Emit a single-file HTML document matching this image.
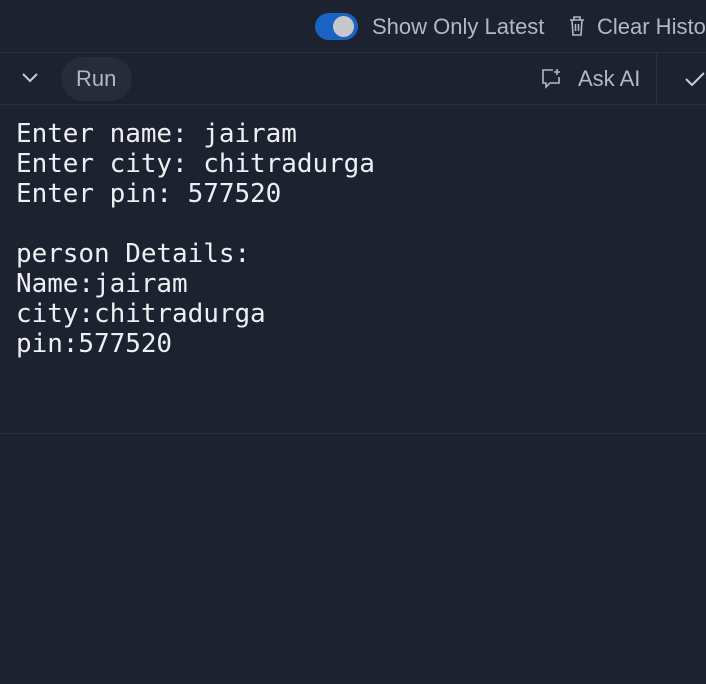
<!DOCTYPE html>
<html><head><style>
html,body{margin:0;padding:0;}
body{width:706px;height:684px;background:#1d2231;position:relative;overflow:hidden;font-family:"Liberation Sans",sans-serif;color:#c9ccd3;}
.ab{position:absolute;}
.line{position:absolute;left:0;width:706px;height:1px;background:#2a3040;}
pre{position:absolute;left:16px;top:119px;margin:0;font-family:"DejaVu Sans Mono",monospace;font-size:26px;line-height:30px;color:#eef0f3;letter-spacing:-0.05px;}
</style></head><body>
<div class="ab" style="left:315px;top:13px;width:43px;height:27px;border-radius:14px;background:#1a62c4;"></div>
<div class="ab" style="left:333px;top:16px;width:21px;height:21px;border-radius:50%;background:#c8c8cc;"></div>
<div class="ab" style="left:372px;top:14px;font-size:22px;color:#b4b8c2;">Show Only Latest</div>
<svg class="ab" style="left:568px;top:15px" width="18" height="22" viewBox="0 0 18 22" fill="none" stroke="#b4b8c2" stroke-width="1.6"><path d="M2 5h14M6 5V2h6v3M4 5l1 15h8l1-15M7.5 9v7M10.5 9v7"/></svg>
<div class="ab" style="left:597px;top:14px;font-size:22px;color:#b4b8c2;white-space:nowrap;">Clear History</div>
<div class="line" style="top:52px"></div>
<svg class="ab" style="left:21px;top:72px" width="18" height="12" viewBox="0 0 18 12" fill="none" stroke="#c9ccd3" stroke-width="2"><path d="M2 2l7 7 7-7"/></svg>
<div class="ab" style="left:61px;top:57px;width:71px;height:44px;border-radius:22px;background:#262c3b;"></div>
<div class="ab" style="left:76px;top:66px;font-size:22px;color:#b4b8c2;">Run</div>
<svg class="ab" style="left:541px;top:67px" width="22" height="22" viewBox="0 0 22 22" fill="none" stroke="#b4b8c2" stroke-width="1.6"><path d="M12 3H2v13h3v4l4-4h9v-6"/><path d="M16 2v6M13 5h6"/></svg>
<div class="ab" style="left:578px;top:66px;font-size:22px;color:#b4b8c2;">Ask AI</div>
<div class="ab" style="left:656px;top:52px;width:1px;height:52px;background:#2a3040;"></div>
<svg class="ab" style="left:684px;top:70px" width="22" height="18" viewBox="0 0 22 18" fill="none" stroke="#c9ccd3" stroke-width="2"><path d="M2 9l6 6L20 3"/></svg>
<div class="line" style="top:104px"></div>
<pre>Enter name: jairam
Enter city: chitradurga
Enter pin: 577520

person Details:
Name:jairam
city:chitradurga
pin:577520</pre>
<div class="line" style="top:433px"></div>
</body></html>
